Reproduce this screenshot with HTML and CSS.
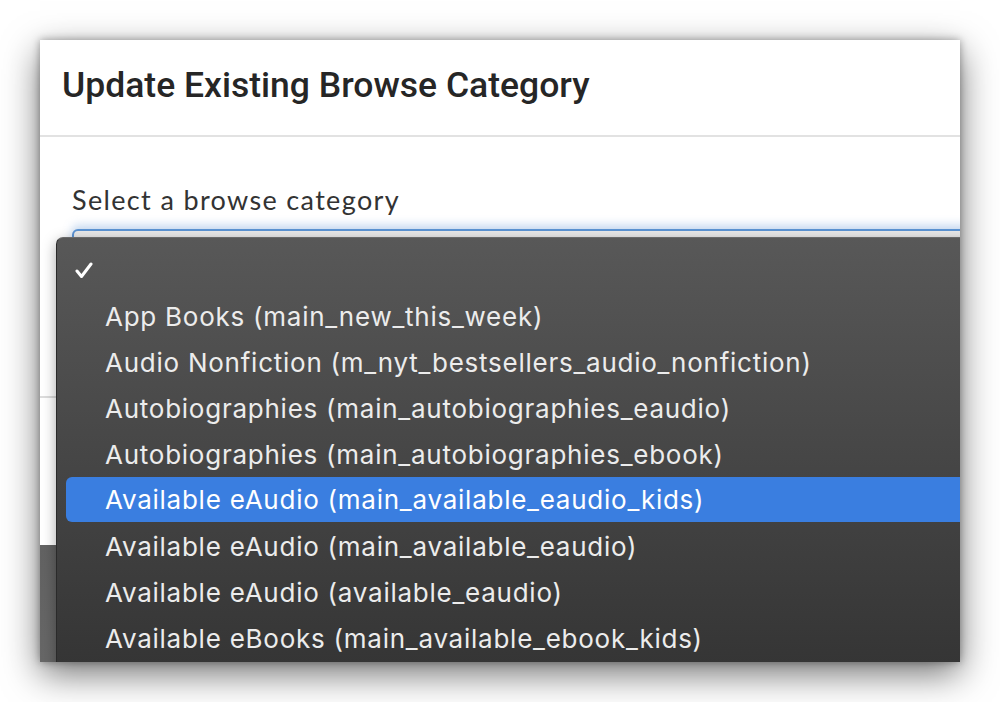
FILE: index.html
```html
<!DOCTYPE html>
<html>
<head>
<meta charset="utf-8">
<link rel="stylesheet" href="styles.css">
</head>
<body>
<div class="screen">
  <div class="modal">
    <div class="modal-header">
      <h4 class="modal-title">Update Existing Browse Category</h4>
    </div>
    <div class="modal-body">
      <label class="field-label">Select a browse category</label>
      <div class="select"></div>
    </div>
    <div class="modal-footer"></div>
  </div>
  <ul class="menu">
    <li class="item checked"><svg class="check" width="18" height="17" viewBox="0 0 18 17"><path d="M2 9 L6.5 14.5 L16 2" fill="none" stroke="#fff" stroke-width="3" stroke-linecap="round" stroke-linejoin="round"/></svg></li>
    <li class="item">App Books (main_new_this_week)</li>
    <li class="item">Audio Nonfiction (m_nyt_bestsellers_audio_nonfiction)</li>
    <li class="item">Autobiographies (main_autobiographies_eaudio)</li>
    <li class="item">Autobiographies (main_autobiographies_ebook)</li>
    <li class="item active">Available eAudio (main_available_eaudio_kids)</li>
    <li class="item">Available eAudio (main_available_eaudio)</li>
    <li class="item">Available eAudio (available_eaudio)</li>
    <li class="item">Available eBooks (main_available_ebook_kids)</li>
  </ul>
</div>
</body>
</html>
```

FILE: styles.css
```css
html, body {
  margin: 0;
  padding: 0;
  background: #ffffff;
}
body {
  padding: 40px;
}
.screen {
  position: relative;
  width: 920px;
  height: 622px;
  overflow: hidden;
  background: linear-gradient(#4c4c4c, #676767);
  box-shadow: 0 12px 34px rgba(0,0,0,0.55), 0 0 8px rgba(0,0,0,0.35);
}
.modal {
  width: 1000px;
  height: 505px;
  background: #ffffff;
  display: flex;
  flex-direction: column;
}
.modal-header {
  height: 97px;
  border-bottom: 2px solid #e2e2e2;
  display: flex;
  align-items: center;
  padding-left: 22px;
  padding-bottom: 6px;
  box-sizing: border-box;
}
.modal-title {
  margin: 0;
  font-family: Roboto, "Liberation Sans", sans-serif;
  font-weight: 500;
  font-size: 35.5px;
  color: #262626;
}
.modal-body {
  height: 261px;
  border-bottom: 2px solid #dcdcdc;
  padding: 45px 0 0 32px;
  box-sizing: border-box;
}
.field-label {
  display: block;
  font-family: Lato, "Open Sans", sans-serif;
  font-size: 27px;
  letter-spacing: 1.35px;
  color: #333;
  line-height: 36px;
}
.select {
  margin-top: 11px;
  height: 40px;
  border: 2px solid #5b93d3;
  border-radius: 6px;
  background: #eaeaea;
  box-shadow: 0 -4px 10px rgba(91,147,211,0.35);
}
.menu {
  position: absolute;
  left: 16px;
  top: 197px;
  width: 920px;
  height: 440px;
  margin: 0;
  padding: 9px 0 0;
  list-style: none;
  box-sizing: border-box;
  background: linear-gradient(#585858, #343434);
  border: 1px solid #2a2a2a;
  border-top-color: #6a6a6a;
  border-radius: 7px 0 0 0;
  box-shadow: 0 4px 14px rgba(0,0,0,0.35);
}
.item {
  height: 46px;
  margin: 0 0 0 9px;
  padding-left: 39px;
  display: flex;
  align-items: center;
  font-family: Inter, "Open Sans", sans-serif;
  font-size: 26px;
  letter-spacing: 0.75px;
  color: #ececec;
  border-radius: 6px 0 0 6px;
}
.item.checked {
  padding-left: 9px;
}
.item.active {
  background: #3a7ee0;
  color: #fff;
  height: 45px;
  margin-bottom: 1px;
}
```
